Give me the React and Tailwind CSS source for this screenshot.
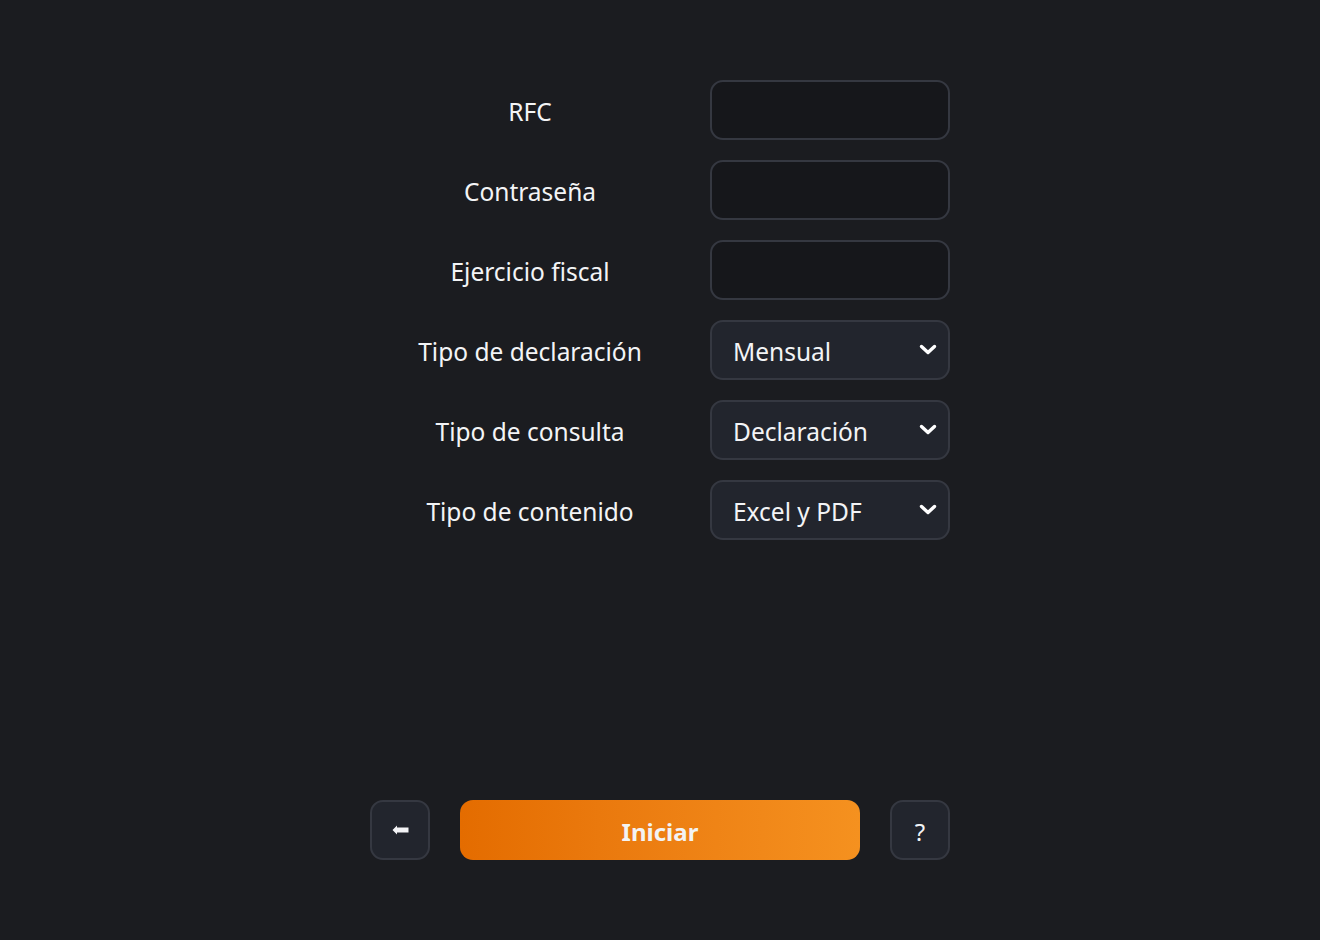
import React from "react";

const FONT = { fontFamily: '"Noto Sans", "Open Sans", sans-serif' };

function Chevron() {
  return (
    <svg className="pointer-events-none absolute right-[13px] top-1/2 -translate-y-1/2" width="18" height="12" viewBox="0 0 18 12" fill="none">
      <path d="M2.5 2.5 L9 8.5 L15.5 2.5" stroke="#ffffff" strokeWidth="3.4" strokeLinecap="round" strokeLinejoin="round" />
    </svg>
  );
}

function ArrowLeft() {
  return (
    <svg width="17" height="10" viewBox="0 0 17 10">
      <path d="M0.5 5 L5 0.5 L5 2.6 L16.5 2.6 L16.5 7.4 L5 7.4 L5 9.5 Z" fill="#f3f4f6" />
    </svg>
  );
}

const fields = [
  { label: "RFC", type: "text" },
  { label: "Contraseña", type: "password" },
  { label: "Ejercicio fiscal", type: "text" },
  { label: "Tipo de declaración", options: ["Mensual", "Anual"] },
  { label: "Tipo de consulta", options: ["Declaración", "Acuse"] },
  { label: "Tipo de contenido", options: ["Excel y PDF", "Excel", "PDF"] },
];

export default function App() {
  return (
    <div className="min-h-[940px] w-full bg-[#1b1c20] text-white" style={FONT}>
      <div className="mx-auto flex h-[940px] w-[580px] flex-col pt-[80px] pb-[80px]">
        <div className="flex flex-col gap-5">
          {fields.map((f) => (
            <div key={f.label} className="flex h-[60px] items-center gap-5">
              <label className="w-[320px] pt-1 text-center text-[24.5px] leading-none text-[#f3f4f6]">{f.label}</label>
              {f.options ? (
                <div className="relative h-[60px] w-[240px]">
                  <select className="h-full w-full appearance-none rounded-[13px] border-2 border-[#353841] bg-[#22252d] pt-1 pl-[21px] text-[24.5px] text-[#f3f4f6] outline-none">
                    {f.options.map((o) => (
                      <option key={o}>{o}</option>
                    ))}
                  </select>
                  <Chevron />
                </div>
              ) : (
                <input
                  type={f.type}
                  className="h-[60px] w-[240px] rounded-[13px] border-2 border-[#353841] bg-[#16171b] px-[21px] text-[24px] text-white outline-none"
                />
              )}
            </div>
          ))}
        </div>

        <div className="mt-auto flex h-[60px] items-center gap-[30px]">
          <button className="flex h-[60px] w-[60px] items-center justify-center rounded-[13px] border-2 border-[#353841] bg-[#22252d]">
            <ArrowLeft />
          </button>
          <button className="h-[60px] w-[400px] rounded-[13px] bg-gradient-to-r from-[#e46c00] to-[#f5911f] pt-1 text-[24px] font-bold text-[#f3f3f3]">
            Iniciar
          </button>
          <button className="flex h-[60px] w-[60px] items-center justify-center rounded-[13px] border-2 border-[#353841] bg-[#22252d] pt-1 text-[24px] leading-none text-[#f3f4f6]">
            ?
          </button>
        </div>
      </div>
    </div>
  );
}
